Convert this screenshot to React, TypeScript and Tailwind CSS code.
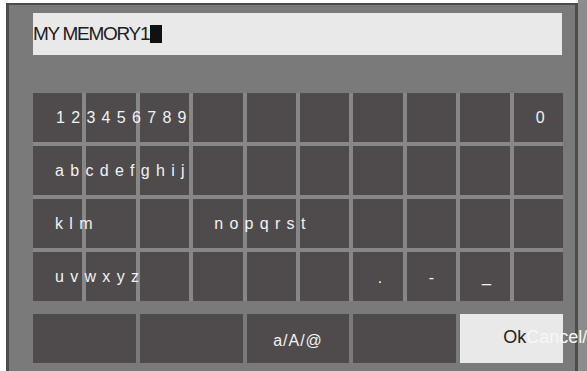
import React from 'react';

const font = { fontFamily: '"Liberation Sans", Arial, sans-serif' };

const Key = ({ children, className = '' }: { children?: React.ReactNode; className?: string }) => (
  <div className={`bg-[#4f4b4c] h-[49px] flex items-center text-[#f2f2f2] text-[16px] ${className}`}>
    {children}
  </div>
);

const Run = ({ text, pl }: { text: string; pl: string }) => (
  <span className={`relative z-10 whitespace-nowrap tracking-[6.3px] ${pl}`}>{text}</span>
);

export default function App() {
  return (
    <div className="w-[587px] h-[371px] overflow-hidden bg-white flex" style={font}>
      <div className="w-[6px] shrink-0 bg-white" />
      <div className="flex flex-col w-[572px] shrink-0 pt-[3px]">
        <div className="flex-1 bg-[#7a7a7a] border-t-[2px] border-l-[3px] border-r-[3px] border-[#4c4c4c] pl-[24px] pt-[8px]">
          <div className="w-[529px] h-[42px] bg-[#e9e9e9] flex items-center text-[19px] tracking-[-1.3px] text-[#202020]">
            <span>MY MEMORY1</span>
            <span className="w-[12px] h-[18px] bg-[#111] ml-[1px]" />
          </div>

          <div className="mt-[38px] w-[530px] grid grid-cols-10 gap-[4px] bg-[#878787]">
            <Key><Run text="123456789" pl="pl-[23px]" /></Key>
            <Key /><Key /><Key /><Key /><Key /><Key /><Key /><Key />
            <Key className="justify-center pl-[4px]">0</Key>

            <Key><Run text="abcdefghij" pl="pl-[22px]" /></Key>
            <Key /><Key /><Key /><Key /><Key /><Key /><Key /><Key /><Key />

            <Key><Run text="klm" pl="pl-[22px]" /></Key>
            <Key /><Key />
            <Key><Run text="nopqrst" pl="pl-[21px]" /></Key>
            <Key /><Key /><Key /><Key /><Key /><Key />

            <Key><Run text="uvwxyz" pl="pl-[22px]" /></Key>
            <Key /><Key /><Key /><Key /><Key />
            <Key className="justify-center pl-[4px] pt-[2px]">.</Key>
            <Key className="justify-center pt-[2px]">-</Key>
            <Key className="justify-center pl-[3px]">_</Key>
            <Key />
          </div>

          <div className="mt-[13px] w-[530px] grid grid-cols-5 gap-[4px]">
            <Key />
            <Key />
            <Key className="justify-center text-[16px] tracking-[1px] pt-[4px]">a/A/@</Key>
            <Key />
            <div className="bg-[#e9e9e9] h-[49px] flex items-center pl-[43px] text-[18px] pb-[2px]">
              <span className="relative z-10 whitespace-nowrap">
                <span className="text-[#222]">Ok</span>
                <span className="text-[#f7f7f7]">Cancel/</span>
              </span>
            </div>
          </div>
        </div>
      </div>
      <div className="flex-1 bg-[#8c8c8c]" />
    </div>
  );
}
